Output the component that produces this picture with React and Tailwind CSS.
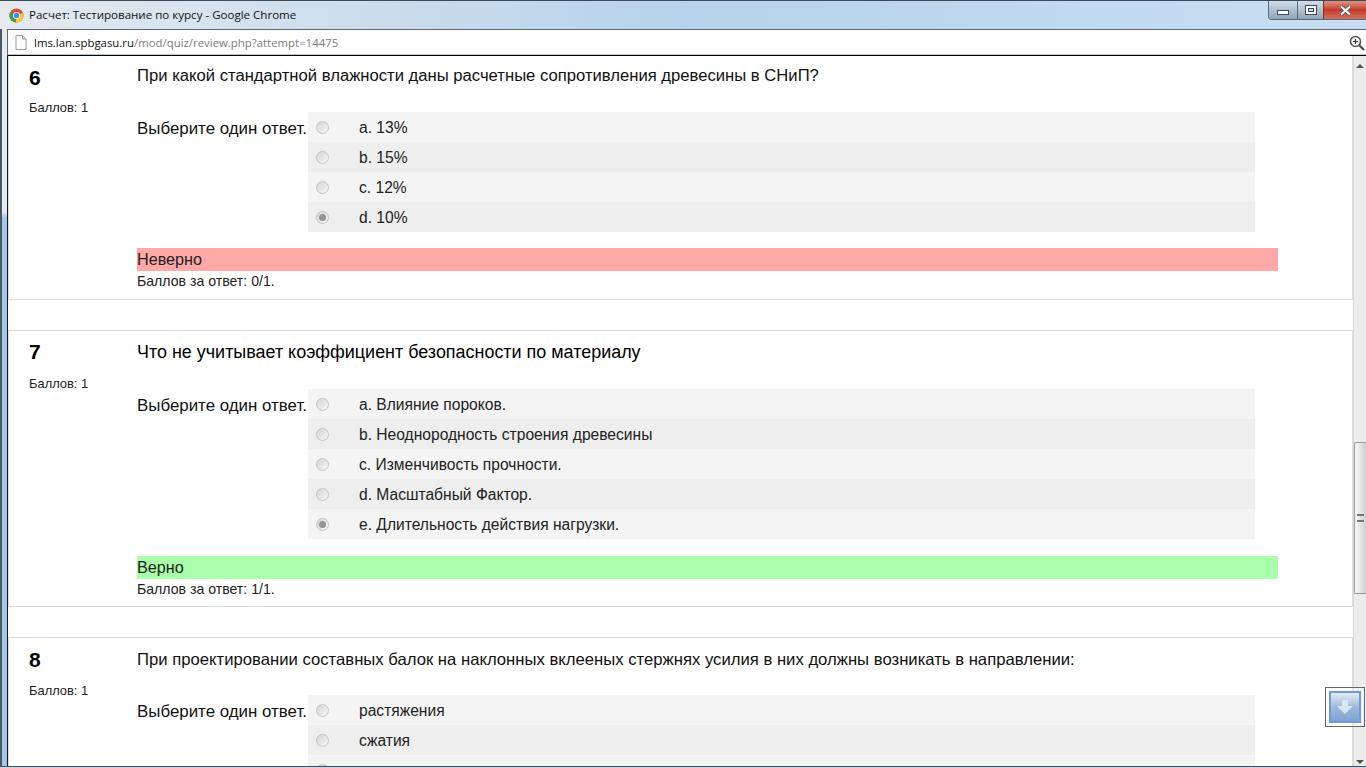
import React from 'react';

const questions = [
    {
        num: 6,
        text: 'При какой стандартной влажности даны расчетные сопротивления древесины в СНиП?',
        textClass: 'text-[16.65px] leading-[20px] text-[#111]',
        numClass: 'mt-[2px] mb-[12px]',
        cardClass: 'border-t-0 pt-[10px] pb-[9px]',
        rowsClass: 'mt-[26px]',
        verdictGap: 'mt-[16px]',
        answers: ['a. 13%', 'b. 15%', 'c. 12%', 'd. 10%'],
        picked: 3,
        verdict: 'Неверно',
        verdictClass: 'bg-[#ffa8a8]',
        score: '0/1',
    },
    {
        num: 7,
        text: 'Что не учитывает коэффициент безопасности по материалу',
        textClass: 'text-[17.95px] leading-[18px] text-black',
        numClass: '-mt-[1px] mb-[14px]',
        cardClass: 'pt-[12px] pb-[8px]',
        rowsClass: 'mt-[28px]',
        verdictGap: 'mt-[17px]',
        answers: ['a. Влияние пороков.', 'b. Неоднородность строения древесины', 'c. Изменчивость прочности.', 'd. Масштабный Фактор.', 'e. Длительность действия нагрузки.'],
        picked: 4,
        verdict: 'Верно',
        verdictClass: 'bg-[#aaffaa]',
        score: '1/1',
    },
    {
        num: 8,
        text: 'При проектировании составных балок на наклонных вклееных стержнях усилия в них должны возникать в направлении:',
        textClass: 'text-[16.68px] leading-[20px] text-[#111]',
        numClass: 'mb-[13px]',
        cardClass: 'pt-[12px] pb-[9px]',
        rowsClass: 'mt-[25px]',
        // the third answer is below the fold, only the top of its radio shows
        answers: ['растяжения', 'сжатия', ''],
        picked: -1,
    },
];

function Radio({ checked }) {
    return (
        <span className="flex h-[13px] w-[13px] shrink-0 items-center justify-center rounded-full border border-[#c4c4c4] bg-gradient-to-br from-[#d4d4d4] to-[#f8f8f8]">
            {checked && <span className="h-[7px] w-[7px] rounded-full bg-[#949494]" />}
        </span>
    );
}

function ChromeLogo() {
    return (
        <svg width="15" height="15" viewBox="0 0 16 16">
            <circle cx="8" cy="8" r="7.5" fill="#e2493b" />
            <path d="M8 8 L1.5 4.2 A7.5 7.5 0 0 0 7.2 15.5 Z" fill="#3d9f4a" />
            <path d="M8 8 L14.9 5 A7.5 7.5 0 0 1 7.2 15.5 Z" fill="#f3c634" />
            <circle cx="8" cy="8" r="3.7" fill="#fff" />
            <circle cx="8" cy="8" r="2.9" fill="#4a8be8" />
        </svg>
    );
}

function Question({ q }) {
    return (
        <div className={`mb-[30px] border border-[#dcdcdc] ${q.cardClass}`}>
            <div className="flex">
                <div className="w-[128px] shrink-0 pl-[20px]">
                    <div className={`text-[21px] leading-[20px] font-bold text-black ${q.numClass}`}>{q.num}</div>
                    <div className="text-[12.9px] leading-[16px] text-[#222]">Баллов: 1</div>
                </div>
                <div className="min-w-0 flex-1">
                    <div className={`whitespace-nowrap ${q.textClass}`}>{q.text}</div>
                    <div className={`flex ${q.rowsClass}`}>
                        <div className="w-[171px] shrink-0 pt-[7px] text-[16.9px] leading-[20px] whitespace-nowrap text-[#111]">Выберите один ответ.</div>
                        <div className="w-[947px]">
                            {q.answers.map((a, i) => (
                                <div key={i} className={`flex h-[30px] items-center pl-[8px] ${i % 2 ? 'bg-[#eeeeee]' : 'bg-[#f4f4f4]'}`}>
                                    <Radio checked={i === q.picked} />
                                    <span className="ml-[30px] pt-[2px] text-[15.6px] leading-[20px] text-[#222]">{a}</span>
                                </div>
                            ))}
                        </div>
                    </div>
                    {q.verdict && (
                        <div className={q.verdictGap}>
                            <div className={`h-[23px] w-[1141px] text-[16.2px] leading-[23px] text-[#222] ${q.verdictClass}`}>{q.verdict}</div>
                            <div className="mt-[1px] text-[14.1px] leading-[18px] text-[#222]">Баллов за ответ: {q.score}.</div>
                        </div>
                    )}
                </div>
            </div>
        </div>
    );
}

export default function App() {
    return (
        <div className="relative flex h-[768px] w-[1366px] flex-col overflow-hidden border-t border-[#3d4a58] bg-gradient-to-r from-[#e4eaf0] via-[#b7d2ea] to-[#c8def2]" style={{ fontFamily: '"Liberation Sans", Arial, sans-serif' }}>
            {/* title bar */}
            <div className="flex h-[28px] shrink-0 items-center justify-between pl-[9px]">
                <div className="flex items-center gap-[5px]">
                    <ChromeLogo />
                    <span className="text-[11.55px] text-[#111]" style={{ fontFamily: '"Open Sans", sans-serif' }}>Расчет: Тестирование по курсу - Google Chrome</span>
                </div>
                <div className="flex h-[19px] self-start overflow-hidden rounded-bl-[4px] border-b border-l border-[#596a7c]">
                    <div className="flex w-[28px] items-end justify-center bg-gradient-to-b from-[#d0dee9] to-[#8fa4b8] pb-[4px]">
                        <span className="h-[5px] w-[12px] border border-[#3a4b5e] bg-white" />
                    </div>
                    <div className="flex w-[26px] items-center justify-center border-l border-[#596a7c] bg-gradient-to-b from-[#d0dee9] to-[#8fa4b8]">
                        <span className="flex h-[10px] w-[12px] items-center justify-center border border-[#3a4b5e] bg-white">
                            <span className="h-[4px] w-[6px] border border-[#3a4b5e] bg-[#c5d6e6]" />
                        </span>
                    </div>
                    <div className="flex w-[43px] items-center justify-center border-l border-[#8a2f25] bg-gradient-to-b from-[#dd9384] via-[#c43a26] to-[#d2705e]">
                        <svg width="13" height="11" viewBox="0 0 13 11">
                            <path d="M2 1.5 L11 9.5 M11 1.5 L2 9.5" stroke="#47505c" strokeWidth="3.6" />
                            <path d="M2 1.5 L11 9.5 M11 1.5 L2 9.5" stroke="#fff" strokeWidth="2" />
                        </svg>
                    </div>
                </div>
            </div>

            <div className="flex min-h-0 flex-1">
                {/* left window frame */}
                <div className="w-[7px] shrink-0 border-l-2 border-[#4a5866] bg-[linear-gradient(to_bottom,#e4eaf0_0,#e4eaf0_183px,#a6c4e6_189px)]" />

                <div className="flex min-w-0 flex-1 flex-col">
                    {/* address bar */}
                    <div className="flex h-[27px] shrink-0 items-center border-y border-t-[#5a6672] border-b-black border-l border-l-[#5a6672] bg-white pl-[7px] pr-[1px] shadow-[inset_0_-1px_0_#b8c4d0]">
                        <svg width="12" height="15" viewBox="0 0 12 15">
                            <path d="M1 .5 H7.5 L11 4 V14.5 H1 Z" fill="#fff" stroke="#9a9a9a" />
                            <path d="M7.5 .5 V4 H11" fill="#e8e8e8" stroke="#9a9a9a" />
                        </svg>
                        <span className="ml-[7px] text-[11.4px] text-[#111]" style={{ fontFamily: '"Open Sans", sans-serif' }}>
                            lms.lan.spbgasu.ru<span className="text-[#7b7b7b]">/mod/quiz/review.php?attempt=14475</span>
                        </span>
                        <svg className="ml-auto" width="16" height="16" viewBox="0 0 16 16" fill="none">
                            <circle cx="6.5" cy="6.5" r="5" stroke="#555" strokeWidth="1.6" fill="#fff" />
                            <path d="M4 6.5 H9 M6.5 4 V9" stroke="#333" strokeWidth="1.2" />
                            <path d="M10.2 10.2 L15 15" stroke="#555" strokeWidth="2.4" />
                        </svg>
                    </div>

                    {/* page + scrollbar */}
                    <div className="flex min-h-0 flex-1 border-l border-[#101820] bg-white">
                        <div className="min-w-0 flex-1 overflow-hidden">
                            {questions.map((q) => (
                                <Question key={q.num} q={q} />
                            ))}
                        </div>
                        <div className="flex w-[13px] shrink-0 flex-col items-center border-l border-[#dadada] bg-[#ececec]">
                            <span className="mt-[8px] border-x-[4px] border-b-[4px] border-x-transparent border-b-[#555]" />
                            <div className="mt-[374px] flex h-[152px] w-[12px] items-center justify-center self-end rounded-l-[2px] border border-r-0 border-[#9a9a9a] bg-gradient-to-r from-[#fafafa] to-[#cfcfcf]">
                                <span className="h-[8px] w-[7px] border-y-2 border-[#777]" />
                            </div>
                            <span className="mt-auto mb-[2px] border-x-[4px] border-t-[4px] border-x-transparent border-t-[#555]" />
                        </div>
                    </div>
                </div>
            </div>
            <div className="h-[2px] shrink-0 border-t border-[#3d4f62] bg-[#c8d8e8]" />

            {/* scroll-to-bottom button */}
            <div className="absolute left-[1325px] top-[686px] flex h-[40px] w-[40px] items-center justify-center border border-[#666] bg-white/30">
                <div className="flex h-[32px] w-[32px] items-center justify-center border-2 border-[#6d9ade] bg-gradient-to-b from-[#e4ebf3] via-[#9dbbdc] to-[#7ea4cf]">
                    <svg width="16" height="14" viewBox="0 0 16 14">
                        <path d="M5 0 H11 V6 H16 L8 14 L0 6 H5 Z" fill="#d9e6f4" />
                    </svg>
                </div>
            </div>
        </div>
    );
}
